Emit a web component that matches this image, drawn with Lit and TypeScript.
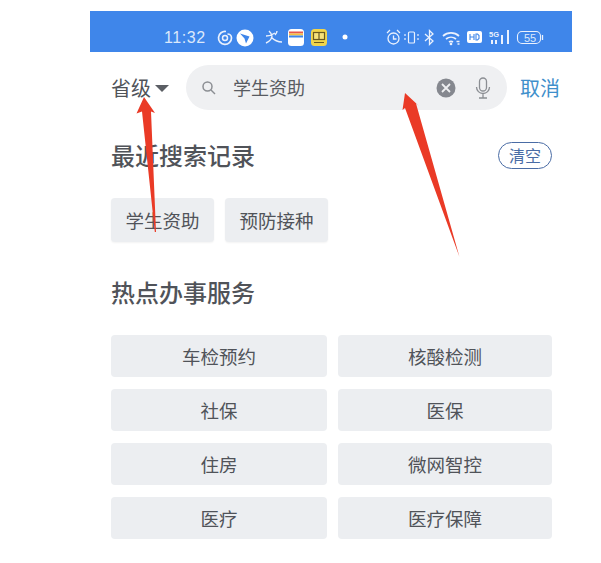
import { LitElement, html, css } from "lit";
import { customElement } from "lit/decorators.js";

const hot = ["车检预约", "核酸检测", "社保", "医保", "住房", "微网智控", "医疗", "医疗保障"];
const recent = ["学生资助", "预防接种"];

@customElement("app-root")
export class AppRoot extends LitElement {
  static styles = css`
    :host { display: block; width: 601px; height: 563px; background: #fff; position: relative; overflow: hidden;
      font-family: "Noto Sans CJK SC", "Liberation Sans", sans-serif; color: #505359; }
    .phone { width: 482px; margin: 0 0 0 90px; padding-top: 11px; }
    .status { height: 41px; background: #3f86ea; display: flex; align-items: center; padding: 11px 0 0 74px; color: #dbe8fb; box-sizing: border-box; }
    .time { font: 16px "Liberation Sans", sans-serif; letter-spacing: 0.6px; width: 52px; margin-top: 1px; }
    .status svg { display: block; flex: none; }
    .search { display: flex; align-items: center; height: 45px; margin-top: 13px; padding-left: 21px; }
    .region { font-size: 20px; line-height: 28px; width: 39px; white-space: nowrap; margin-top: 1px; }
    .caret { width: 0; height: 0; border: 7px solid transparent; border-top: 7px solid #5b5e64; border-bottom: 0; margin: 1px 0 0 5px; }
    .pill { width: 321px; height: 45px; margin-left: 17px; border-radius: 23px; background: #eff0f2; display: flex; align-items: center; box-sizing: border-box; padding-left: 15px; }
    .pill .q { font-size: 18px; margin: 0 0 2px 17px; width: 203px; color: #585b61; }
    .mic { margin-left: 19px; }
    .cancel { font-size: 20px; color: #3f8fcb; margin: 0 0 1px 13px; white-space: nowrap; }
    .head { display: flex; align-items: center; justify-content: space-between; margin: 0 20px 0 21px; height: 36px; }
    h2 { margin: 0; font-size: 24px; font-weight: 500; line-height: 36px; color: #505359; }
    .recent-head { margin-top: 27px; }
    .clear { width: 54px; height: 27px; box-sizing: border-box; border: 1.5px solid #4a6ca5; border-radius: 14px; color: #4a6ca5; font-size: 16px; line-height: 24px; text-align: center; }
    .chips { display: flex; gap: 11px; margin: 25px 0 0 21px; }
    .chip { height: 44px; padding: 0 14px; width: 103px; box-sizing: border-box; border-radius: 4px; background: #eceef1; font-size: 18.5px; line-height: 44px; text-align: center; white-space: nowrap; box-shadow: 0 1px 2px #f3f3f3; }
    .hot-head { margin-top: 32px; }
    .grid { display: grid; grid-template-columns: 216px 214px; column-gap: 11px; row-gap: 12px; margin: 25px 0 0 21px; }
    .cell { height: 42px; border-radius: 4px; background: #eceef1; font-size: 18.5px; line-height: 42px; text-align: center; }
    .arrows { position: absolute; left: 0; top: 0; pointer-events: none; }
  `;

  render() {
    return html`
      <div class="phone">
        <div class="status">
          <span class="time">11:32</span>
          <svg width="334" height="26" viewBox="0 0 334 26" fill="none" stroke="#eaf1fd" stroke-width="1.5">
            <path d="M10 7.500a6.500 6.500 0 1 0 5.500 6.500 4 4 0 0 0-4-4" stroke-width="1.700" />
            <circle cx="9" cy="14" r="2.500" stroke-width="1.500" />
            <circle cx="29" cy="14" r="8.500" fill="#fff" stroke="none" />
            <path d="M24 9.500l9.500 3-3.500 7-1.500-5z" fill="#3f86ea" stroke="none" />
            <path d="M53 7c1.500 1.500 3 3 3 5 0 4-4 6-6 7M50 12c3 0 6-1 9-3M55 13c3 3 6 5 11 5M61 7c0 2-1 3-2 4" stroke-width="1.400" />
            <rect x="72" y="5" width="16" height="17" rx="3.500" fill="#fff" stroke="none" />
            <path d="M73 8.500h14" stroke="#e8584a" stroke-width="2" />
            <path d="M73 10.500h14" stroke="#f5c242" stroke-width="2" />
            <path d="M73 12.500h14" stroke="#3f86ea" stroke-width="2" />
            <rect x="95" y="5" width="16" height="17" rx="3.500" fill="#f2d54a" stroke="none" />
            <rect x="97.500" y="8.500" width="11" height="7" fill="#f6e27a" stroke="#6b5a20" stroke-width="1.200" />
            <path d="M103 8.500v7M98 18.500h10" stroke="#6b5a20" stroke-width="1.200" />
            <circle cx="129" cy="13" r="2.500" fill="#fff" stroke="none" />
            <circle cx="177.500" cy="14.500" r="5.500" stroke-width="1.300" />
            <path d="M177.500 11.500v3.500h3M171 9l3-3M184 9l-3-3" stroke-width="1.300" />
            <rect x="192.500" y="8" width="6" height="11" rx="1" stroke-width="1.200" />
            <path d="M189 10v2M189 14v2M202 10v2M202 14v2" stroke-width="1.200" />
            <path d="M209 10l8 7-3.500 3.500v-14l3.500 3.500-8 7" stroke-width="1.300" />
            <path d="M227 12a12 12 0 0 1 16 0M230 15a8 8 0 0 1 10 0M233 18a3.500 3.500 0 0 1 4 0" stroke-width="1.700" />
            <circle cx="235" cy="20" r="1.300" fill="#eaf1fd" stroke="none" />
            <path d="M240.500 17.500h3M241.500 20h2" stroke-width="1.300" />
            <rect x="251" y="7" width="15" height="12" rx="2" fill="#fff" stroke="none" />
            <path d="M254 10v6M258 10v6M254 13h4M260 10v6h1.500l1.500-1.500v-3l-1.500-1.500z" stroke="#3f86ea" stroke-width="1.100" />
            <path d="M276 16v4M280 16v4M286 11v9M292 6v14" stroke-width="2" />
            <rect x="301.500" y="7.500" width="23" height="12" rx="4.500" stroke-width="1.100" />
            <path d="M326.500 11v5" stroke-width="1.300" />
            <text x="314" y="17.500" font-family="Liberation Sans, sans-serif" font-size="11" fill="#dbe8fb" stroke="none" text-anchor="middle">55</text>
            <text x="273" y="13" font-family="Liberation Sans, sans-serif" font-size="7.500" font-weight="bold" fill="#eaf1fd" stroke="none">5G</text>
          </svg>
        </div>

        <div class="search">
          <span class="region">省级</span>
          <span class="caret"></span>
          <div class="pill">
            <svg width="15" height="15" viewBox="0 0 15 15" fill="none" stroke="#8b8e93" stroke-width="1.500">
              <circle cx="6.500" cy="6.500" r="4.500" />
              <path d="M10 10l4 4" />
            </svg>
            <span class="q">学生资助</span>
            <svg width="20" height="20" viewBox="0 0 20 20">
              <circle cx="10" cy="10" r="9.500" fill="#85888f" />
              <path d="M6 6l8 8M14 6l-8 8" stroke="#eff0f2" stroke-width="1.800" />
            </svg>
            <svg class="mic" width="16" height="22" viewBox="0 0 16 22" fill="none" stroke="#8b8e93" stroke-width="1.300">
              <rect x="4.500" y="1" width="7" height="13" rx="3.500" />
              <path d="M1.500 10a6.500 6.500 0 0 0 13 0M8 16.500V21M4 21h8" />
            </svg>
          </div>
          <span class="cancel">取消</span>
        </div>

        <div class="head recent-head">
          <h2>最近搜索记录</h2>
          <span class="clear">清空</span>
        </div>
        <div class="chips">
          ${recent.map((t) => html`<div class="chip">${t}</div>`)}
        </div>

        <div class="head hot-head"><h2>热点办事服务</h2></div>
        <div class="grid">
          ${hot.map((t) => html`<div class="cell">${t}</div>`)}
        </div>
      </div>

      <svg class="arrows" width="601" height="563" viewBox="0 0 601 563">
        <path d="M144 97L136.500 113.500L142 111.500L154.800 232L156 232L151 111.500L155 113Z" fill="#ea3a26" />
        <path d="M405 93L402.500 110L405 108L459.500 257L416 103.500L419 106Z" fill="#ea3a26" />
      </svg>
    `;
  }
}
